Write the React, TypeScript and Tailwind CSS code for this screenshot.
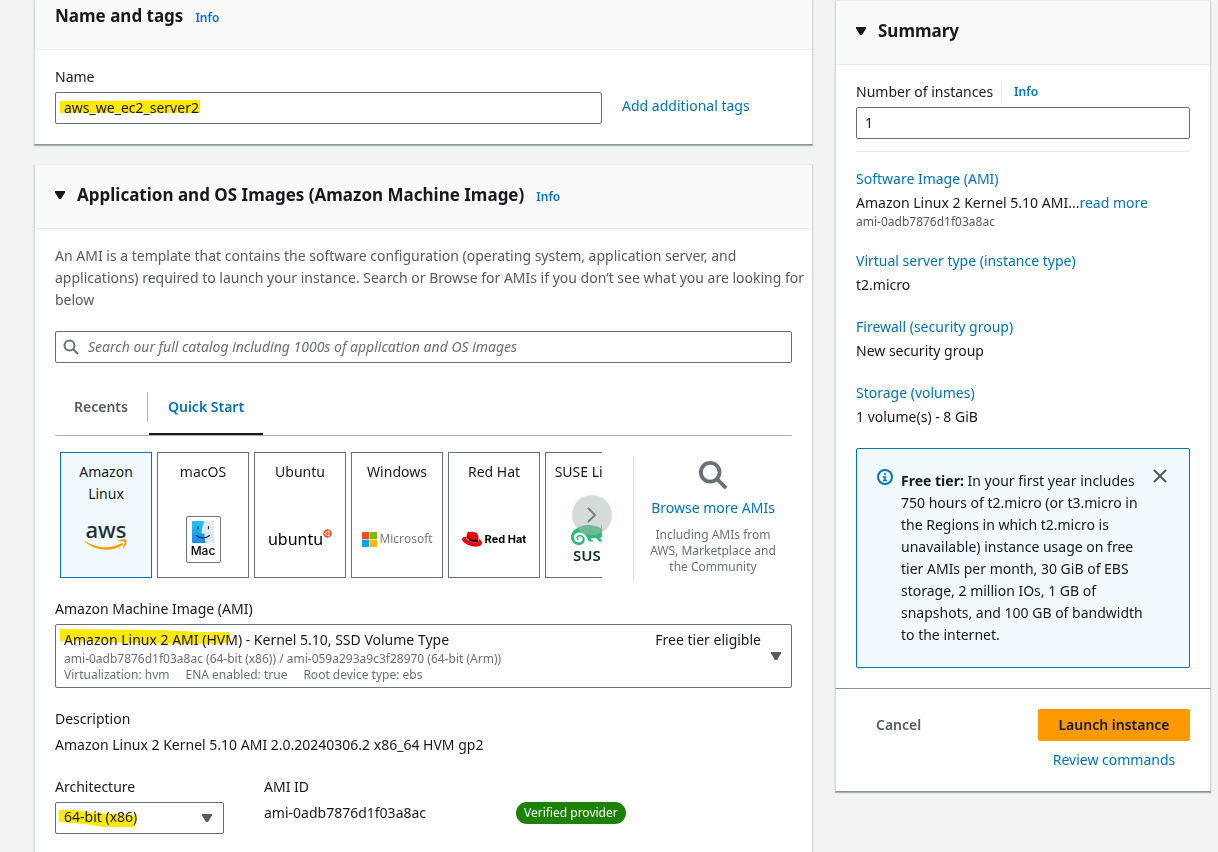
import React, { useState } from "react";
import { SiRedhat, SiSuse } from "react-icons/si";

const link = "text-[#0073bb] hover:underline";

function Caret({ className }: { className: string }) {
  return (
    <svg viewBox="0 0 10 8" aria-hidden="true" className={className}>
      <path d="M0 0h10v1.5L6 8H4L0 1.500z" fill="currentColor" />
    </svg>
  );
}

function SearchIcon({ className }: { className: string }) {
  return (
    <svg viewBox="0 0 16 16" fill="none" stroke="currentColor" strokeWidth="2" aria-hidden="true" className={className}>
      <circle cx="6.500" cy="6.500" r="5" />
      <path d="M10.200 10.200 15 15" />
    </svg>
  );
}

function AwsLogo() {
  return (
    <svg viewBox="0 0 44 48" className="h-12 w-11" aria-label="AWS">
      <text x="22" y="23" textAnchor="middle" fontFamily="Noto Sans, sans-serif" fontSize="22" fontWeight="500" fill="#232f3e">
        aws
      </text>
      <g transform="translate(0 2.500)" fill="#ff9900">
        <path d="M1 23.500c12 8 26 8 37 2l1.500 1.500C28 35 12 33.500 1 24.500z" />
        <path d="M34 23.300c3-1.800 7-2 8.500-1 .7 2-.3 5.500-2.800 8-.7.300-.7-.2-.5-.800.8-2 1.700-4.500 1.200-5.200-.8-.8-3.800-.5-5.800-.3-.7 0-1-.3-.6-.7z" />
      </g>
    </svg>
  );
}

function MacLogo() {
  return (
    <span className="flex h-[47px] w-[35px] flex-col items-center rounded-xs border border-[#777] bg-white pt-1">
      <svg viewBox="0 0 22 22" className="h-[22px] w-[22px]" aria-hidden="true">
        <defs>
          <linearGradient id="finder" x1="0" y1="0" x2="0" y2="1">
            <stop offset="0" stopColor="#1fc4f8" />
            <stop offset="1" stopColor="#1d88e8" />
          </linearGradient>
        </defs>
        <rect width="22" height="22" rx="1" fill="url(#finder)" />
        <path d="M12.500 0C10.500 4 9.600 8 9.500 12.500h3c0 3.500.3 6.500 1.200 9.500H21a1 1 0 0 0 1-1V1a1 1 0 0 0-1-1z" fill="#e3e9f1" />
        <path d="M6 5.500v2.200M16.500 5.500v2.200M4.500 14.500c3.500 3.200 9.500 3.200 13 0" fill="none" stroke="#17324f" strokeWidth="1.200" strokeLinecap="round" />
      </svg>
      <span className="font-['Inter','Liberation_Sans',sans-serif] text-xs leading-4 font-medium text-black">Mac</span>
    </span>
  );
}

function UbuntuLogo() {
  return (
    <span className="flex items-start text-black">
      <span className="text-base leading-6">ubuntu</span>
      <svg viewBox="0 0 9 9" className="mt-0.5 h-[9px] w-[9px]" aria-hidden="true">
        <circle cx="4.500" cy="4.500" r="4.200" fill="#e95420" />
        <circle cx="4.500" cy="4.500" r="1.800" fill="none" stroke="#fff" strokeWidth=".8" />
        <circle cx="2" cy="4.500" r=".7" fill="#fff" />
        <circle cx="5.800" cy="2.300" r=".7" fill="#fff" />
        <circle cx="5.800" cy="6.700" r=".7" fill="#fff" />
      </svg>
    </span>
  );
}

function MicrosoftLogo() {
  return (
    <span className="flex items-center gap-[3px]">
      <svg viewBox="0 0 15 15" className="h-[15px] w-[15px]" aria-hidden="true">
        <path d="M0 0h7.200v7.200H0z" fill="#f25022" />
        <path d="M7.800 0H15v7.200H7.800z" fill="#7fba00" />
        <path d="M0 7.800h7.200V15H0z" fill="#00a4ef" />
        <path d="M7.800 7.800H15V15H7.800z" fill="#ffb900" />
      </svg>
      <span className="font-['Open_Sans','Noto_Sans',sans-serif] text-xs leading-4 font-medium text-[#737373]">Microsoft</span>
    </span>
  );
}

function RedHatLogo() {
  return (
    <span className="flex items-center gap-[3px]">
      <span className="relative flex">
        <svg viewBox="0 0 24 24" className="absolute h-5 w-5" aria-hidden="true">
          <path d="M5 10l2-3 13 6-1 3-9-1z" fill="#000" />
        </svg>
        <SiRedhat className="relative h-5 w-5 text-[#ee0000]" aria-hidden="true" />
      </span>
      <span className="font-['Inter',sans-serif] text-[11px] leading-4 font-bold text-black">Red Hat</span>
    </span>
  );
}

function SuseLogo() {
  return (
    <span className="flex flex-col items-center pt-2">
      <SiSuse className="-my-2.5 h-10 w-10 text-[#30ba78]" aria-hidden="true" />
      <span className="mt-1 text-[15px] leading-3 font-semibold text-[#0c322c]">SUSE</span>
    </span>
  );
}

const systems = [
  { name: "Amazon Linux", Logo: AwsLogo },
  { name: "macOS", Logo: MacLogo },
  { name: "Ubuntu", Logo: UbuntuLogo },
  { name: "Windows", Logo: MicrosoftLogo },
  { name: "Red Hat", Logo: RedHatLogo },
  { name: "SUSE Linux", Logo: SuseLogo },
];

const card = "border border-[#d5dbdb] border-t-[#eaeded] border-b-[#879596] bg-white shadow-[0_1px_1px_rgba(0,28,36,0.3)]";
const field = "h-8 w-full rounded-xs border border-[#687078] bg-transparent px-2 pb-0.5";

function SummaryItem({ title, children }: { title: string; children: React.ReactNode }) {
  return (
    <div>
      <a href="#" className={link}>{title}</a>
      <div className="mt-0.5">{children}</div>
    </div>
  );
}

export default function App() {
  const [selected, setSelected] = useState("Amazon Linux");
  return (
    <div className="flex h-screen items-start gap-[22px] overflow-hidden bg-[#f2f3f3] pr-[7px] pl-[34px] font-['Noto_Sans','Open_Sans',sans-serif] text-sm leading-[22px] text-[#16191f]">
      <main className="flex min-w-0 flex-1 flex-col gap-[19px]">
        <section className={`${card} border-t-0`}>
          <header className="flex h-[50px] items-baseline gap-3 border-b border-[#eaeded] bg-[#fafafa] px-5 pt-1">
            <h2 className="text-[17px] leading-6 font-bold">Name and tags</h2>
            <a href="#" className={`${link} text-xs font-semibold`}>Info</a>
          </header>
          <div className="px-5 pt-4 pb-5">
            <label htmlFor="name">Name</label>
            <div className="mt-1 flex items-center">
              <div className="relative flex-1">
                <input id="name" defaultValue="aws_we_ec2_server2" className={field} />
                <svg viewBox="0 0 140 14" preserveAspectRatio="none" className="pointer-events-none absolute top-2 left-[5px] h-3.5 w-[140px] mix-blend-multiply" aria-hidden="true">
                  <path d="M0 1 140 0v13H0z" fill="#ffe900" />
                </svg>
              </div>
              <div className="w-[190px] pb-1 pl-5">
                <a href="#" className={link}>Add additional tags</a>
              </div>
            </div>
          </div>
        </section>

        <section className={card}>
          <header className="flex h-16 items-center gap-3 border-b border-[#eaeded] bg-[#fafafa] px-5 pb-1">
            <Caret className="h-2 w-2.5" />
            <div className="flex items-baseline gap-3">
              <h2 className="text-[17px] leading-6 font-bold">Application and OS Images (Amazon Machine Image)</h2>
              <a href="#" className={`${link} text-xs font-semibold`}>Info</a>
            </div>
          </header>
          <div className="px-5 pt-4 pb-10">
            <p className="-mr-4 text-[#545b64]">
              An AMI is a template that contains the software configuration (operating system, application server, and applications) required to launch your instance. Search or Browse for AMIs if you don’t see what you are looking for below
            </p>
            <div className="relative mt-5">
              <SearchIcon className="absolute top-2 left-2 h-4 w-4 text-[#687078]" />
              <input
                type="search"
                aria-label="Search AMIs"
                placeholder="Search our full catalog including 1000s of application and OS images"
                className={`${field} pl-8 placeholder:text-[#687078] placeholder:italic`}
              />
            </div>
            <div role="tablist" className="mt-4 flex items-stretch border-b border-[#aab7b8] font-semibold">
              <button role="tab" aria-selected={false} className="h-14 px-[19px] text-[#545b64]">Recents</button>
              <span className="my-[13px] mr-px w-px bg-[#aab7b8]" />
              <button role="tab" aria-selected={true} className="h-14 border-b-2 border-[#16191f] px-[19px] pt-0.5 text-[#0073bb]">Quick Start</button>
            </div>

            <div className="mt-4 flex pl-[5px]">
              <div className="relative min-w-0 flex-1">
                <div className="flex gap-[5px] overflow-hidden">
                  {systems.map(({ name, Logo }) => (
                    <button
                      key={name}
                      aria-pressed={selected === name}
                      onClick={() => setSelected(name)}
                      className="flex h-[126px] w-[92px] shrink-0 flex-col items-center justify-between border border-[#687078] px-1 pt-2 pb-3.5 aria-pressed:border-[#0073bb] aria-pressed:bg-[#f1faff]"
                    >
                      <span className={name === "Amazon Linux" ? "w-16" : "whitespace-nowrap"}>{name}</span>
                      <span className="flex h-12 items-center justify-center">
                        <Logo />
                      </span>
                    </button>
                  ))}
                </div>
                <button aria-label="Next" className="absolute top-[43px] -right-2.5 flex h-10 w-10 items-center justify-center rounded-full bg-[#aab7b8]/50 text-[#7a8080]">
                  <svg viewBox="0 0 10 16" fill="none" stroke="currentColor" strokeWidth="2" className="h-4 w-2.5" aria-hidden="true">
                    <path d="M1 1l7 7-7 7" />
                  </svg>
                </button>
              </div>
              <div className="mt-[5px] -mb-px ml-[31px] w-[159px] border-l border-[#d5dbdb] pt-[3px] text-center">
                <SearchIcon className="mx-auto h-[30px] w-[30px] text-[#687078]" />
                <a href="#" className={`${link} mt-[7px] block`}>Browse more AMIs</a>
                <p className="mx-auto mt-2 w-36 text-xs leading-4 text-[#687078]">
                  Including AMIs from AWS, Marketplace and the Community
                </p>
              </div>
            </div>

            <div id="ami-label" className="mt-5">Amazon Machine Image (AMI)</div>
            <button aria-haspopup="listbox" aria-labelledby="ami-label" className="relative mt-1 flex w-full items-center gap-2.5 rounded-xs border border-[#687078] py-1 pr-2.5 pl-2 text-left">
              <span className="flex-1">
                <span className="flex justify-between">
                  <span>Amazon Linux 2 AMI (HVM) - Kernel 5.10, SSD Volume Type</span>
                  <span>Free tier eligible</span>
                </span>
                <span className="block text-xs leading-4 text-[#687078]">ami-0adb7876d1f03a8ac (64-bit (x86)) / ami-059a293a9c3f28970 (64-bit (Arm))</span>
                <span className="flex gap-4 text-xs leading-4 text-[#687078]">
                  <span>Virtualization: hvm</span>
                  <span>ENA enabled: true</span>
                  <span>Root device type: ebs</span>
                </span>
              </span>
              <Caret className="h-2 w-2.5 text-[#545b64]" />
              <svg viewBox="0 0 171 18" className="pointer-events-none absolute top-1 left-1 h-[18px] w-[171px] mix-blend-multiply" aria-hidden="true">
                <path d="M0 0l100 1 40 2h30v10l-16 2-80-1-74-2z" fill="#ffe900" />
              </svg>
            </button>

            <div className="mt-5">Description</div>
            <div className="mt-1">Amazon Linux 2 Kernel 5.10 AMI 2.0.20240306.2 x86_64 HVM gp2</div>

            <div className="mt-5 grid grid-cols-[169px_212px_auto] gap-x-10">
              <div>
                <label htmlFor="arch" className="block">Architecture</label>
                <div className="relative mt-1">
                  <select id="arch" className={`${field} appearance-none`}>
                    <option>64-bit (x86)</option>
                    <option>64-bit (Arm)</option>
                  </select>
                  <Caret className="pointer-events-none absolute top-3 right-3 h-2 w-2.5 text-[#545b64]" />
                  <svg viewBox="0 0 78 18" className="pointer-events-none absolute top-2 left-1 h-[18px] w-[78px] mix-blend-multiply" aria-hidden="true">
                    <path d="M0 0h14l24 3 38 2v12H44l-18-3-26-2z" fill="#ffe900" />
                  </svg>
                </div>
              </div>
              <div>
                <div>AMI ID</div>
                <div className="mt-1">ami-0adb7876d1f03a8ac</div>
              </div>
              <div className="pt-[25px]">
                <span className="inline-block rounded-full bg-[#1d8102] px-2 text-xs leading-[22px] text-white">Verified provider</span>
              </div>
            </div>
          </div>
        </section>
      </main>

      <aside className="w-[376px] shrink-0">
        <section className={card}>
          <header className="flex h-16 items-center gap-3 border-b border-[#eaeded] bg-[#fafafa] px-5 pb-1">
            <Caret className="h-2 w-2.5" />
            <h2 className="text-[17px] leading-6 font-bold">Summary</h2>
          </header>
          <div className="px-5 pt-4 pb-5">
            <div className="flex items-center">
              <label htmlFor="count">Number of instances</label>
              <span className="mr-3 ml-2 h-[18px] w-px bg-[#eaeded]" />
              <a href="#" className={`${link} text-xs font-semibold`}>Info</a>
            </div>
            <input id="count" defaultValue="1" className={`${field} mt-1`} />
            <hr className="mt-3 mb-4 border-[#eaeded]" />
            <div className="flex flex-col gap-5">
              <SummaryItem title="Software Image (AMI)">
                <div>Amazon Linux 2 Kernel 5.10 AMI...<a href="#" className={link}>read more</a></div>
                <div className="text-xs leading-4 text-[#545b64]">ami-0adb7876d1f03a8ac</div>
              </SummaryItem>
              <SummaryItem title="Virtual server type (instance type)">t2.micro</SummaryItem>
              <SummaryItem title="Firewall (security group)">New security group</SummaryItem>
              <SummaryItem title="Storage (volumes)">1 volume(s) - 8 GiB</SummaryItem>
            </div>
            <div className="mt-5 flex items-start gap-2 rounded-xs border border-[#0073bb] bg-[#f1faff] p-5">
              <svg viewBox="0 0 16 16" className="h-4 w-4 shrink-0 text-[#0073bb]" fill="none" stroke="currentColor" strokeWidth="2" aria-hidden="true">
                <circle cx="8" cy="8" r="7" />
                <path d="M8 4v2M6 8h2v3.500M6 11.500h4" strokeWidth="1.600" />
              </svg>
              <p className="min-w-0 flex-1 py-px">
                <b className="font-bold">Free tier:</b> In your first year includes 750 hours of t2.micro (or t3.micro in the Regions in which t2.micro is unavailable) instance usage on free tier AMIs per month, 30 GiB of EBS storage, 2 million IOs, 1 GB of snapshots, and 100 GB of bandwidth to the internet.
              </p>
              <button aria-label="Close" className="mr-0.5 text-[#545b64]">
                <svg viewBox="0 0 14 14" fill="none" stroke="currentColor" strokeWidth="2" className="h-3.5 w-3.5" aria-hidden="true">
                  <path d="M1 1l12 12M13 1 1 13" />
                </svg>
              </button>
            </div>
          </div>
        </section>
        <section className={`${card} flex items-start justify-between border-t-0 px-5 pt-5 pb-5`}>
          <button className="h-8 px-5 font-semibold text-[#545b64]">Cancel</button>
          <div className="flex flex-col items-center gap-2">
            <button className="h-8 w-[152px] rounded-xs bg-[#ff9900] font-semibold">Launch instance</button>
            <a href="#" className={link}>Review commands</a>
          </div>
        </section>
      </aside>
    </div>
  );
}
